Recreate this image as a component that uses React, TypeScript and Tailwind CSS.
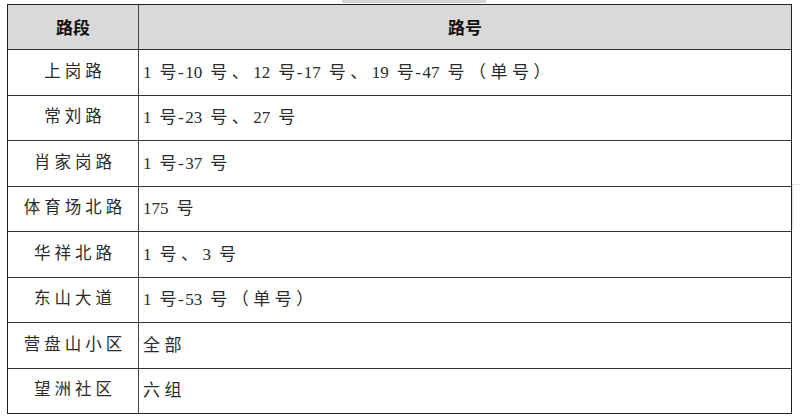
const rows: ReadonlyArray<[string, string]> = [
  ["上岗路", "1 号-10 号、12 号-17 号、19 号-47 号（单号）"],
  ["常刘路", "1 号-23 号、27 号"],
  ["肖家岗路", "1 号-37 号"],
  ["体育场北路", "175 号"],
  ["华祥北路", "1 号、3 号"],
  ["东山大道", "1 号-53 号（单号）"],
  ["营盘山小区", "全部"],
  ["望洲社区", "六组"],
]

// digits and dashes stay tight, CJK glyphs and spaces get the wide SimSun-like spacing
function Spaced({ text }: { text: string }) {
  const chars = Array.from(text)
  return (
    <>
      {chars.map((c, i) => {
        if (/[0-9]/.test(c)) return <span key={i}>{c}</span>
        if (c === "-")
          return (
            <span key={i} className="px-[1.5px]">
              -
            </span>
          )
        if (c === " ")
          return (
            <span key={i} className="inline-block w-[8px]">
              {" "}
            </span>
          )
        const tight = chars[i + 1] === "-" || i === chars.length - 1
        return (
          <span key={i} className={tight ? "" : "mr-[4.5px]"}>
            {c}
          </span>
        )
      })}
    </>
  )
}

export default function App() {
  return (
    <div className="relative h-[417px] w-[800px] overflow-hidden bg-white">
      <div className="absolute left-[342px] top-0 h-[3px] w-[144px] bg-[#d4d4d4]" />
      <div className="absolute right-0 top-[184px] h-[46px] w-[8px] border-l border-t border-[#e4e4e4]" />
      <div className="pl-[7px] pt-[4px]">
        <div className="w-[785px] border-[1.5px] border-[#222] font-['Liberation_Serif','Noto_Sans_CJK_SC',serif] text-[#2a2a2a]">
          <div className="grid h-[44px] grid-cols-[131px_1fr] bg-[#d9d9d9] font-['Noto_Sans_CJK_SC',sans-serif] text-[17px] font-bold text-[#111]">
            <div className="flex items-center justify-center border-r-[1.5px] border-[#444]">路段</div>
            <div className="flex items-center justify-center">路号</div>
          </div>
          {rows.map(([road, num]) => (
            <div
              key={road}
              className="grid h-[45.5px] grid-cols-[131px_1fr] border-t-[1.5px] border-[#333] text-[16.5px]"
            >
              <div className="flex items-center justify-center border-r-[1.5px] border-[#444] pl-[4px] tracking-[4px]">
                {road}
              </div>
              <div className="flex items-center whitespace-pre pl-[4px] text-[17px]">
                <Spaced text={num} />
              </div>
            </div>
          ))}
        </div>
      </div>
    </div>
  )
}
